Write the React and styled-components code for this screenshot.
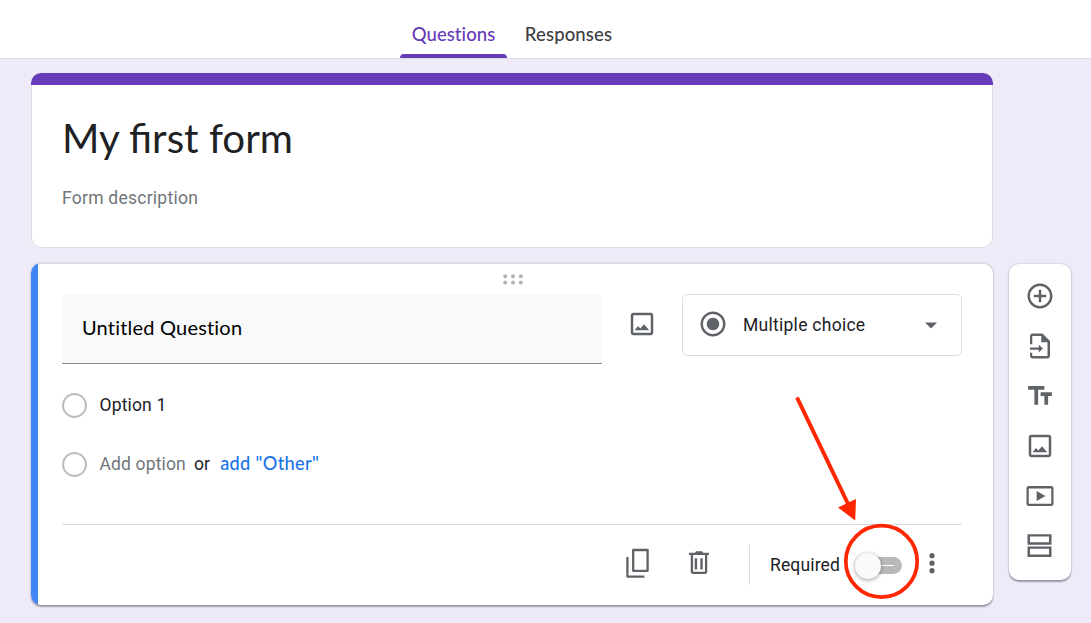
import React from "react";
import styled, { createGlobalStyle } from "styled-components";

const GlobalStyle = createGlobalStyle`
  *, *::before, *::after { box-sizing: border-box; }
  body { margin: 0; background: #eeeaf8; font-family: Roboto, "Liberation Sans", sans-serif; color: #202124; overflow: hidden; }
`;

const display = `Lato, "Open Sans", sans-serif`;

const Page = styled.div`
  position: relative;
  width: 1091px;
  height: 623px;
  overflow: hidden;
  background: #eeeaf8;
  font-size: 17.5px;
  letter-spacing: 0.15px;
`;

const TopBar = styled.header`
  display: flex;
  height: 59px;
  padding-left: 400px;
  gap: 8px;
  background: #fff;
  border-bottom: 1px solid #dadce0;
`;

const Tab = styled.div`
  width: 107px;
  height: 58px;
  display: flex;
  flex-direction: column;
  justify-content: space-between;
  align-items: center;
  padding-top: 21px;
  font: 500 18.5px/26px ${display};
  letter-spacing: ${(p) => p.$tracking};
  white-space: nowrap;
  color: ${(p) => (p.$active ? "#673ab7" : "#3c4043")};
  &::after {
    content: "";
    width: 100%;
    height: 4px;
    border-radius: 4px 4px 0 0;
    background: ${(p) => (p.$active ? "#673ab7" : "transparent")};
  }
`;

const Workspace = styled.main`
  display: flex;
  align-items: flex-end;
  gap: 16px;
  padding: 14px 0 0 31px;
`;

const Column = styled.div`
  display: flex;
  flex-direction: column;
  gap: 15px;
  width: 962px;
`;

const TitleCard = styled.section`
  height: 175px;
  display: flex;
  flex-direction: column;
  border-radius: 10px;
  overflow: hidden;
  background: #fff;
`;

const Banner = styled.div`
  height: 12px;
  background: #673ab7;
`;

const TitleBody = styled.div`
  flex: 1;
  padding: 28px 30px 0;
  border: 1px solid #dadce0;
  border-top: 0;
  border-radius: 0 0 10px 10px;
`;

const FormTitle = styled.h1`
  margin: 0;
  font: 400 40.3px/50px ${display};
  letter-spacing: 0;
  white-space: nowrap;
`;

const Description = styled.p`
  margin: 23px 0 0;
  line-height: 25px;
  letter-spacing: 0.25px;
  color: #70757a;
`;

const QuestionCard = styled.section`
  height: 342px;
  display: flex;
  border-radius: 10px;
  overflow: hidden;
  background: #fff;
  box-shadow: inset 0 1px 0 #dadce0, 0 0 2px rgba(60, 50, 90, 0.28), 0 1.5px 1.5px rgba(50, 45, 70, 0.4);
`;

const Accent = styled.div`
  width: 7px;
  background: #4285f4;
`;

const QuestionBody = styled.div`
  flex: 1;
  display: flex;
  flex-direction: column;
  padding: 0 31px 0 24px;
`;

const Grip = styled.div`
  height: 31px;
  display: flex;
  justify-content: center;
  padding: 11px 0 0 1px;
`;

const QuestionRow = styled.div`
  display: flex;
  height: 70px;
`;

const QuestionField = styled.div`
  width: 540px;
  padding-left: 20px;
  border-bottom: 1px solid #80868b;
  border-radius: 5px 5px 0 0;
  background: #f8f9fa;
  font: 400 20px/66px ${display};
  letter-spacing: 0.2px;
  color: #000;
`;

const ImageButton = styled.div`
  width: 80px;
  display: flex;
  justify-content: center;
  padding-top: 15px;
`;

const TypeSelect = styled.div`
  width: 280px;
  height: 62px;
  display: flex;
  align-items: center;
  border: 1px solid #dadce0;
  border-radius: 5px;
  padding: 0 23px 2px 15px;
`;

const TypeName = styled.span`
  flex: 1;
  padding-top: 2px;
  margin-left: 15px;
  letter-spacing: 0.27px;
`;

const Option = styled.div`
  display: flex;
  align-items: center;
  height: 26px;
  margin-top: ${(p) => p.$top}px;
  color: ${(p) => (p.$muted ? "#70757a" : "#202124")};
`;

const Radio = styled.span`
  width: 25px;
  height: 25px;
  margin-right: 12.5px;
  border: 2px solid #bdbdbd;
  border-radius: 50%;
`;

const Or = styled.span`
  margin: 0 10px 0 8px;
  color: #202124;
`;

const Other = styled.span`
  padding-bottom: 3px;
  font: 500 18.2px/24px ${display};
  letter-spacing: 0.33px;
  color: #1a73e8;
`;

const Footer = styled.footer`
  display: flex;
  align-items: center;
  height: 81px;
  margin-top: auto;
  border-top: 1px solid #dadce0;
  padding-left: 563px;
`;

const Separator = styled.span`
  width: 1px;
  height: 40px;
  margin: 0 20px 0 39px;
  background: #dadce0;
`;

const Toggle = styled.span`
  position: relative;
  width: 47px;
  height: 26px;
  margin: 1px 0 0 15px;
  display: flex;
  align-items: center;
  &::before {
    content: "";
    width: 39px;
    height: 17px;
    margin-left: 8px;
    border-radius: 9px;
    background: linear-gradient(#fff, #fff) 18px 8px / 13px 1px no-repeat #b9b9b9;
  }
  &::after {
    content: "";
    position: absolute;
    left: 0;
    top: 0;
    width: 26px;
    height: 26px;
    border-radius: 50%;
    background: #fafafa;
    box-shadow: 0 1px 4px rgba(0, 0, 0, 0.4);
  }
`;

const Palette = styled.aside`
  width: 62px;
  height: 316px;
  margin-bottom: 25px;
  padding-top: 17px;
  display: flex;
  flex-direction: column;
  align-items: center;
  gap: 20px;
  border-radius: 10px;
  background: #fff;
  box-shadow: 0 0 2px rgba(60, 50, 90, 0.28), 0 1.5px 1.5px rgba(50, 45, 70, 0.4);
`;

const Glyph = styled.svg`
  display: block;
  flex: none;
  fill: #5f6368;
  margin-left: ${(p) => p.$left || 0}px;
  margin-bottom: ${(p) => p.$lift || 0}px;
`;

const Annotation = styled.svg`
  position: absolute;
  left: 780px;
  top: 390px;
  pointer-events: none;
`;

const Icon = ({ d, ...rest }) => (
  <Glyph width="30" height="30" viewBox="0 0 24 24" {...rest}>
    <path d={d} />
  </Glyph>
);

const IMAGE =
  "M19 5v14H5V5h14m0-2H5c-1.1 0-2 .9-2 2v14c0 1.1.9 2 2 2h14c1.1 0 2-.9 2-2V5c0-1.1-.9-2-2-2zM6.1 17l2.7-3.4 1.9 2 2.9-3.5 4.2 4.9z";

const TOOLS = [
  "M13 7h-2v4H7v2h4v4h2v-4h4v-2h-4V7zm-1-5C6.48 2 2 6.48 2 12s4.48 10 10 10 10-4.48 10-10S17.52 2 12 2zm0 18c-4.41 0-8-3.59-8-8s3.59-8 8-8 8 3.59 8 8-3.59 8-8 8z",
  "M14 2H6c-1.1 0-2 .9-2 2v6.6h1.8V3.9H13V9h5v11H5.8v-2.700H4V20c0 1.100.9 2 2 2h12c1.100 0 2-.9 2-2V8zM4 13.100v1.800h7v2.200l3.400-3.100-3.400-3.100v2.200z",
  "M2.500 4v3h5v12h3V7h5V4h-13zm19 5h-9v3h3v7h3v-7h3V9z",
  IMAGE,
  "M21 4H3c-1.100 0-1.800.8-1.800 1.800v12.400c0 1 .7 1.800 1.800 1.800h18c1.100 0 1.800-.8 1.800-1.800V5.800c0-1-.7-1.800-1.800-1.800zm0 14.100H3V5.900h18zM9.300 8l7 4-7 4z",
  "M2 2.500h19.200v8.400H2zM4 4.400v4.500h15.200V4.400zM2 12.300h19.200v8.400H2zM4 14.200v4.500h15.200v-4.500z",
];

export default function App() {
  return (
    <Page>
      <GlobalStyle />
      <TopBar>
        <Tab $active $tracking="0.05px">Questions</Tab>
        <Tab $tracking="0.15px">Responses</Tab>
      </TopBar>
      <Workspace>
        <Column>
          <TitleCard>
            <Banner />
            <TitleBody>
              <FormTitle>My first form</FormTitle>
              <Description>Form description</Description>
            </TitleBody>
          </TitleCard>
          <QuestionCard>
            <Accent />
            <QuestionBody>
              <Grip>
                <svg width="20" height="11" fill="#b3b3b3">
                  {[2.2, 10, 17.8].map((x) => (
                    <g key={x}>
                      <circle cx={x} cy="2.2" r="2" />
                      <circle cx={x} cy="8.4" r="2" />
                    </g>
                  ))}
                </svg>
              </Grip>
              <QuestionRow>
                <QuestionField>Untitled Question</QuestionField>
                <ImageButton>
                  <Icon d={IMAGE} />
                </ImageButton>
                <TypeSelect>
                  <Icon d="M12 7c-2.760 0-5 2.240-5 5s2.240 5 5 5 5-2.240 5-5-2.240-5-5-5zm0-5C6.480 2 2 6.480 2 12s4.480 10 10 10 10-4.480 10-10S17.520 2 12 2zm0 18c-4.420 0-8-3.580-8-8s3.580-8 8-8 8 3.580 8 8-3.580 8-8 8z" />
                  <TypeName>Multiple choice</TypeName>
                  <Glyph width="14" height="8" $lift={-2}>
                    <path d="M1 1.500h12l-6 6z" />
                  </Glyph>
                </TypeSelect>
              </QuestionRow>
              <Option $top={28}>
                <Radio />
                Option 1
              </Option>
              <Option $top={33} $muted>
                <Radio />
                Add option
                <Or>or</Or>
                <Other>add "Other"</Other>
              </Option>
              <Footer>
                <Glyph width="26" height="30" viewBox="0 0 26 30" $lift={4}>
                  <path
                    d="M8.200 2h14.400v20.800H8.200zM2.400 9v19.600h17"
                    fill="none"
                    stroke="#5f6368"
                    strokeWidth="2.300"
                    strokeLinejoin="round"
                  />
                </Glyph>
                <Glyph width="22" height="26" viewBox="0 0 22 26" $left={37} $lift={4}>
                  <path
                    d="M3.900 4v17.700q0 1.200 1.200 1.200h11.800q1.200 0 1.200-1.200V4"
                    fill="none"
                    stroke="#5f6368"
                    strokeWidth="2.300"
                  />
                  <path d="M1 2.700h6l1-1.500h6l1 1.500h6V5H1zM6.700 8.200h2.400v11.300H6.700zm5.600 0h2.400v11.300h-2.400z" />
                </Glyph>
                <Separator />
                Required
                <Toggle />
                <Glyph width="6" height="22" $left={27} $lift={3}>
                  <circle cx="3" cy="2.700" r="2.600" />
                  <circle cx="3" cy="10.200" r="2.600" />
                  <circle cx="3" cy="17.700" r="2.600" />
                </Glyph>
              </Footer>
            </QuestionBody>
          </QuestionCard>
        </Column>
        <Palette>
          {TOOLS.map((d) => (
            <Icon key={d} d={d} fillRule="evenodd" />
          ))}
        </Palette>
      </Workspace>
      <Annotation width="150" height="220">
        <path d="M17 7.500L70 118" stroke="#ff2600" strokeWidth="4" />
        <path d="M58 117.500L76 109l-.8 21.500z" fill="#ff2600" />
        <circle cx="101.500" cy="171.400" r="35.700" fill="none" stroke="#ff2600" strokeWidth="3.700" />
      </Annotation>
    </Page>
  );
}
